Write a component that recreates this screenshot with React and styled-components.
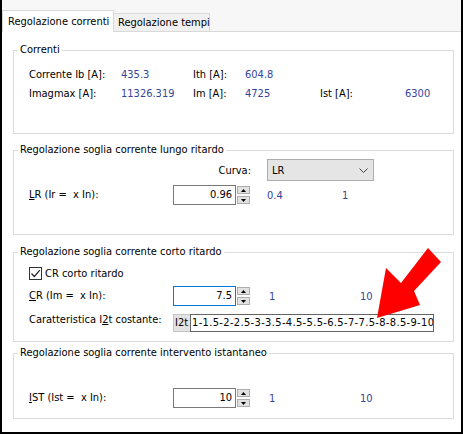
import React from 'react';
import styled, { createGlobalStyle } from 'styled-components';

const Global = createGlobalStyle`
  html, body { margin: 0; padding: 0; background: #fff; }
  body {
    font-family: "DejaVu Sans Condensed", "Liberation Sans", Arial, sans-serif;
    font-size: 11px;
    color: #000;
  }
  * { box-sizing: border-box; }
`;

const Window = styled.div`
  position: relative;
  width: 463px;
  height: 434px;
  border: 2px solid #000;
  border-top: none;
  background: #fff;
  display: flex;
  flex-direction: column;
  overflow: hidden;
`;

const TabStrip = styled.div`
  flex: none;
  height: 32px;
  display: flex;
  align-items: flex-end;
  background: #f7f7f7;
`;

const Tab = styled.div`
  flex: none;
  width: ${p => p.$w}px;
  height: ${p => (p.$active ? 22 : 19)}px;
  padding-left: ${p => p.$pl}px;
  background: ${p => (p.$active ? '#fff' : '#f0f0f0')};
  border-top: 1px solid #d9d9d9;
  border-right: 1px solid #d9d9d9;
  border-left: ${p => (p.$active ? '1px solid #d9d9d9' : 'none')};
  border-bottom: ${p => (p.$active ? 'none' : '1px solid #d9d9d9')};
  line-height: ${p => (p.$active ? 19 : 17)}px;
  padding-top: ${p => (p.$active ? 1 : 0)}px;
  white-space: nowrap;
`;

const TabFiller = styled.div`
  flex: 1;
  align-self: stretch;
  border-bottom: 1px solid #d9d9d9;
`;

const Panel = styled.div`
  flex: 1;
  padding: 11px 7px 0 11px;
  display: flex;
  flex-direction: column;
`;

const Group = styled.fieldset`
  margin: ${p => p.$mt || 0}px 0 0 0;
  padding: 0;
  border: 1px solid #dcdcdc;
  min-width: 0;
`;

const Legend = styled.legend`
  margin-left: 4px;
  padding: 0 2px;
  line-height: 14px;
  font-size: 11px;
`;

const GroupBody = styled.div`
  padding: ${p => p.$pt}px 0 ${p => p.$pb}px 15px;
  display: flex;
  flex-direction: column;
`;

const InfoGrid = styled.div`
  display: grid;
  grid-template-columns: 92px 72px 52px 75px 85px auto;
  grid-auto-rows: 19px;
  align-items: center;
  white-space: nowrap;
`;

const Row = styled.div`
  display: flex;
  align-items: ${p => p.$align || 'center'};
  height: ${p => p.$h || 20}px;
  margin-top: ${p => p.$mt || 0}px;
  white-space: nowrap;
`;

const Label = styled.span`
  flex: none;
  width: 144px;
  white-space: pre;
  line-height: ${p => p.$lh || 14}px;
`;

const CurvaLabel = styled.span`
  flex: none;
  width: 79px;
  text-align: right;
  padding-right: 1px;
`;

const Value = styled.span`
  flex: none;
  color: #34449a;
  width: ${p => p.$w || 'auto'}${p => (p.$w ? 'px' : '')};
  margin-left: ${p => p.$ml || 0}px;
`;

const Spin = styled.div`
  flex: none;
  width: 79px;
  display: flex;
  align-items: center;
  gap: 1px;
`;

const SpinInput = styled.div`
  width: 63px;
  height: 20px;
  border: 1px solid ${p => (p.$focus ? '#0078d7' : '#7a7a7a')};
  background: #fff;
  text-align: right;
  padding-right: 3px;
  line-height: 18px;
`;

const SpinButtons = styled.div`
  display: flex;
  flex-direction: column;
  gap: 2px;
`;

const SpinBtn = styled.div`
  width: 13px;
  height: 8px;
  background: #e1e1e1;
  border: 1px solid #adadad;
  display: flex;
  align-items: center;
  justify-content: center;
`;

const Combo = styled.div`
  flex: none;
  margin-left: 15px;
  width: 107px;
  height: 22px;
  background: #e5e5e5;
  border: 1px solid #adadad;
  display: flex;
  align-items: center;
  justify-content: space-between;
  padding: 0 5px 0 4px;
`;

const CheckBox = styled.span`
  flex: none;
  width: 13px;
  height: 13px;
  border: 1px solid #333;
  background: #fff;
  display: inline-flex;
  align-items: center;
  justify-content: center;
  margin-right: 3px;
`;

const ListBox = styled.div`
  flex: none;
  display: flex;
  height: 18px;
`;

const ListHead = styled.div`
  width: 17px;
  height: 18px;
  background: #e3e3e3;
  border: 1px solid #c4c4c4;
  border-right: none;
  overflow: hidden;
  padding-left: 1px;
  line-height: 16px;
`;

const ListCell = styled.div`
  width: 244px;
  height: 18px;
  background: #fff;
  border: 1px solid #646464;
  padding-left: 1px;
  line-height: 16px;
  letter-spacing: 0.35px;
  white-space: nowrap;
  overflow: hidden;
`;

const ArrowLayer = styled.svg`
  position: absolute;
  left: -2px;
  top: 0;
  width: 463px;
  height: 434px;
  pointer-events: none;
`;

const Up = () => (
  <svg width="5" height="3" viewBox="0 0 5 3"><polygon points="0,3 5,3 2.5,0" fill="#000" /></svg>
);
const Down = () => (
  <svg width="5" height="3" viewBox="0 0 5 3"><polygon points="0,0 5,0 2.5,3" fill="#000" /></svg>
);

const SpinBox = ({ value, focus }) => (
  <Spin>
    <SpinInput $focus={focus}>{value}</SpinInput>
    <SpinButtons>
      <SpinBtn><Up /></SpinBtn>
      <SpinBtn><Down /></SpinBtn>
    </SpinButtons>
  </Spin>
);

export default function App() {
  return (
    <>
      <Global />
      <Window>
        <TabStrip>
          <Tab $active $w={112} $pl={5}>Regolazione correnti</Tab>
          <Tab $w={96} $pl={4}>Regolazione tempi</Tab>
          <TabFiller />
        </TabStrip>
        <Panel>
          <Group>
            <Legend>Correnti</Legend>
            <GroupBody $pt={8} $pb={30}>
              <InfoGrid>
                <span>Corrente Ib [A]:</span>
                <Value>435.3</Value>
                <span>Ith [A]:</span>
                <Value>604.8</Value>
                <span />
                <span />
                <span>Imagmax [A]:</span>
                <Value>11326.319</Value>
                <span>Im [A]:</span>
                <Value>4725</Value>
                <span>Ist [A]:</span>
                <Value>6300</Value>
              </InfoGrid>
            </GroupBody>
          </Group>

          <Group $mt={9}>
            <Legend>Regolazione soglia corrente lungo ritardo</Legend>
            <GroupBody $pt={2} $pb={29}>
              <Row $h={22}>
                <Label />
                <CurvaLabel>Curva:</CurvaLabel>
                <Combo>
                  <span>LR</span>
                  <svg width="9" height="5" viewBox="0 0 9 5">
                    <path d="M0.5 0.5 L4.5 4.5 L8.5 0.5" fill="none" stroke="#444" strokeWidth="1" />
                  </svg>
                </Combo>
              </Row>
              <Row $mt={4}>
                <Label><u>L</u>R (Ir =  x In):</Label>
                <SpinBox value="0.96" />
                <Value $ml={15} $w={75}>0.4</Value>
                <Value>1</Value>
              </Row>
            </GroupBody>
          </Group>

          <Group $mt={10}>
            <Legend>Regolazione soglia corrente corto ritardo</Legend>
            <GroupBody $pt={6} $pb={9}>
              <Row $h={16}>
                <CheckBox>
                  <svg width="11" height="11" viewBox="0 0 11 11">
                    <path d="M1.5 5.5 L4.3 8.5 L9.8 2.2" fill="none" stroke="#222" strokeWidth="1.2" />
                  </svg>
                </CheckBox>
                <span>CR corto ritardo</span>
              </Row>
              <Row $mt={5}>
                <Label><u>C</u>R (Im =  x In):</Label>
                <SpinBox value="7.5" focus />
                <Value $ml={17} $w={91}>1</Value>
                <Value>10</Value>
              </Row>
              <Row $mt={8} $h={18} $align="flex-start">
                <Label $lh={12}>Caratteristica I<u>2</u>t costante:</Label>
                <ListBox>
                  <ListHead>I2t</ListHead>
                  <ListCell>1-1.5-2-2.5-3-3.5-4.5-5.5-6.5-7-7.5-8-8.5-9-10</ListCell>
                </ListBox>
              </Row>
            </GroupBody>
          </Group>

          <Group $mt={4}>
            <Legend>Regolazione soglia corrente intervento istantaneo</Legend>
            <GroupBody $pt={28} $pb={10}>
              <Row>
                <Label><u>I</u>ST (Ist =  x In):</Label>
                <SpinBox value="10" />
                <Value $ml={17} $w={91}>1</Value>
                <Value>10</Value>
              </Row>
            </GroupBody>
          </Group>
        </Panel>
        <ArrowLayer viewBox="0 0 463 434">
          <polygon
            points="428,248 441,262 414,291 420,305 377,318 386,268 401,283"
            fill="#ff0000"
          />
        </ArrowLayer>
      </Window>
    </>
  );
}
